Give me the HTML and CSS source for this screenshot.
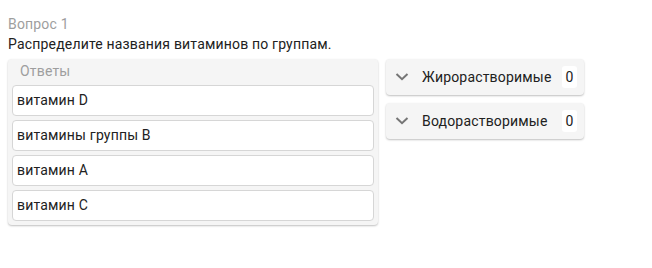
FILE: index.html
```html
<!DOCTYPE html>
<html lang="ru">
<head>
  <meta charset="UTF-8" />
  <title>Вопрос 1</title>
  <link rel="stylesheet" href="styles.css">
</head>
<body>

<div class="question">
  <div class="q-num">Вопрос 1</div>
  <div class="q-text">Распределите названия витаминов по группам.</div>
  <div class="board">
    <div class="answers">
      <div class="answers-title">Ответы</div>
      <div class="item">витамин D</div>
      <div class="item">витамины группы B</div>
      <div class="item">витамин A</div>
      <div class="item">витамин C</div>
    </div>
    <div class="groups">
      <div class="group">
        <svg class="chevron" width="14" height="8" viewBox="0 0 14 8"><path d="M1.5 1 7 6.2 12.5 1" fill="none" stroke="#757575" stroke-width="2"/></svg>
        <span class="group-name">Жирорастворимые</span>
        <span class="count">0</span>
      </div>
      <div class="group">
        <svg class="chevron" width="14" height="8" viewBox="0 0 14 8"><path d="M1.5 1 7 6.2 12.5 1" fill="none" stroke="#757575" stroke-width="2"/></svg>
        <span class="group-name">Водорастворимые</span>
        <span class="count">0</span>
      </div>
    </div>
  </div>
</div>

</body>
</html>
```

FILE: styles.css
```css
* {
  box-sizing: border-box;
}
body {
  margin: 0;
  padding: 16px 8px;
  font-family: Roboto, "Liberation Sans", sans-serif;
  font-size: 14px;
  letter-spacing: 0.18px;
  color: #212121;
  background: #fff;
}
.q-num {
  color: #9e9e9e;
  line-height: 16px;
}
.q-text {
  margin-top: 4px;
  line-height: 16px;
}
.board {
  display: flex;
  align-items: flex-start;
  gap: 8px;
  margin-top: 7px;
}
.answers {
  width: 370px;
  padding: 2px 4px 4px 4px;
  background: #f5f5f5;
  border-radius: 4px;
  box-shadow: 0 1px 2px rgba(0, 0, 0, 0.25);
}
.answers-title {
  color: #9e9e9e;
  padding-left: 8px;
  line-height: 20px;
  margin-bottom: 2px;
}
.item {
  background: #fff;
  border: 1px solid #d6d6d6;
  border-radius: 4px;
  height: 31px;
  line-height: 29px;
  padding: 0 4px;
  margin-top: 4px;
}
.item:first-of-type {
  margin-top: 0;
}
.groups {
  display: flex;
  flex-direction: column;
  gap: 8px;
}
.group {
  display: flex;
  align-items: center;
  width: 198px;
  height: 36px;
  padding: 0 7px 0 9px;
  background: #f5f5f5;
  border-radius: 4px;
  box-shadow: 0 1px 2px rgba(0, 0, 0, 0.25);
}
.chevron {
  flex: none;
}
.group-name {
  margin-left: 13px;
  flex: 1;
}
.count {
  background: #fff;
  border-radius: 3px;
  width: 15px;
  text-align: center;
  line-height: 22px;
}
```
